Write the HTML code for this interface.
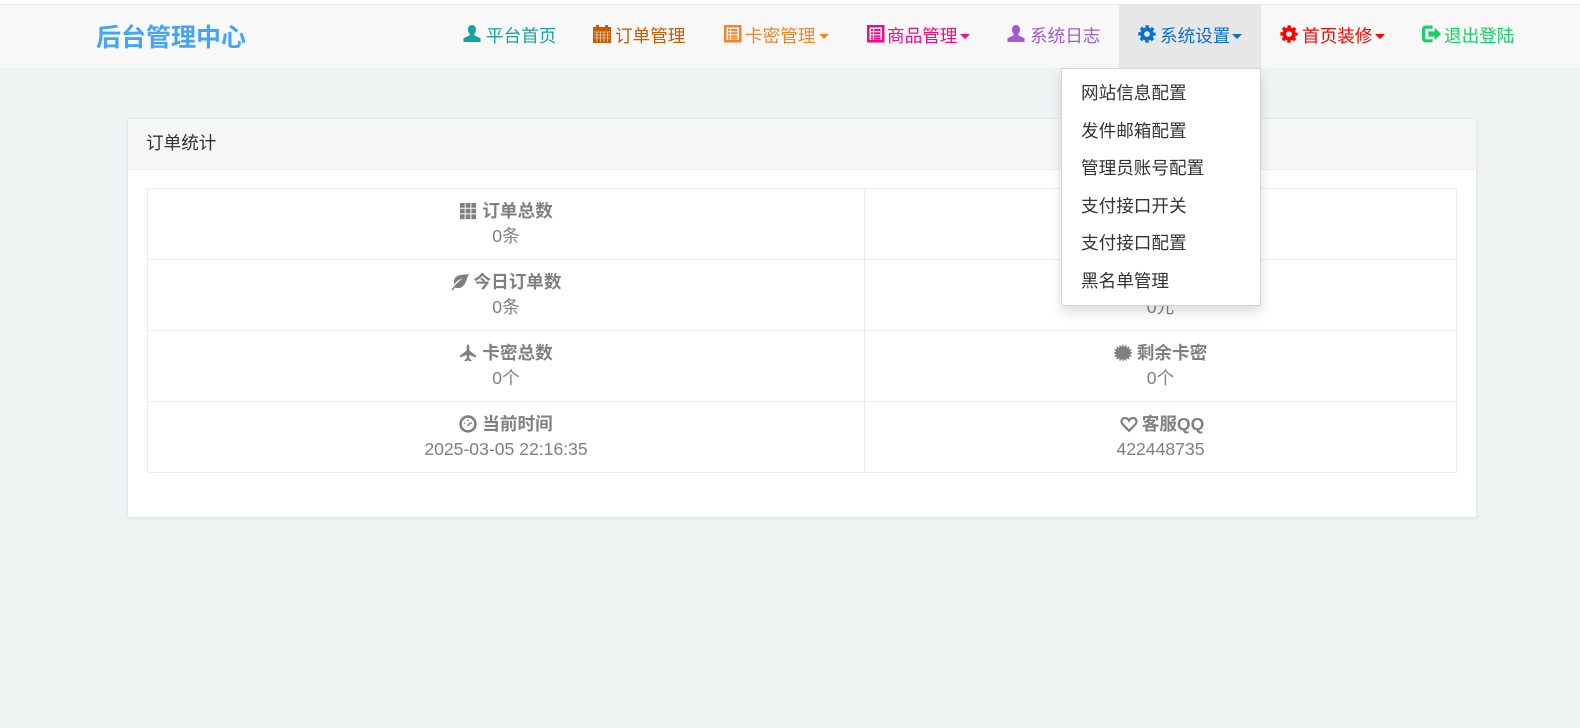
<!DOCTYPE html>
<html lang="zh-CN"><head><meta charset="utf-8"><title>后台管理中心</title>
<style>
*{box-sizing:border-box}
html,body{margin:0;padding:0}
body{width:1580px;height:728px;overflow:hidden;background:#eff3f4;position:relative;font-family:"Liberation Sans","Noto Sans CJK SC",sans-serif;font-size:17.6px;color:#333}
.top{position:absolute;left:0;top:0;width:1580px;height:5px;background:#fff;border-bottom:1px solid #e7e7e7}
.nav{position:absolute;left:0;top:5px;width:1580px;height:63px;background:#f8f8f8}
.active{position:absolute;left:1119px;top:5px;width:142px;height:63px;background:#e7e7e7}
.logo{position:absolute;left:96px;top:23px;line-height:30px;font-size:25px;font-weight:bold;color:#42a5f8;white-space:nowrap}
.i{position:absolute;top:25px;height:20px;line-height:20px;white-space:nowrap}
.i svg{position:absolute;top:0;left:0;width:18px;height:18px}
.i span{position:absolute;top:1px;white-space:nowrap}
.i b{position:absolute;top:9px;width:0;height:0;border-left:5px solid transparent;border-right:5px solid transparent;border-top:5px solid currentColor}
.panel{position:absolute;left:127px;top:118px;width:1350px;height:400px;background:#fff;border:1px solid #e3e8e8;border-radius:3px;box-shadow:0 1px 2px rgba(0,0,0,.06)}
.ph{height:51px;background:#f5f7f7;border-bottom:1px solid #e9eded;padding:0 18px;line-height:49px;color:#333}
table{position:absolute;left:19px;top:69px;width:1309px;height:285px;border-collapse:collapse;table-layout:fixed;color:#808080}
td{border:1px solid #e9eded;text-align:center;padding:10px 8px 0;line-height:25px;height:71px;vertical-align:top}
td strong{display:block;font-weight:bold}
td svg{width:18px;height:18px;vertical-align:-3px;margin-right:5px}
.menu{position:absolute;left:1061px;top:68px;width:200px;height:238px;background:#fff;border:1px solid #d5d5d5;border-radius:0 0 3px 3px;box-shadow:0 6px 12px rgba(0,0,0,.14);padding-top:6px}
.menu div{height:37.5px;line-height:37.5px;padding-left:19px;color:#333;white-space:nowrap}
</style></head><body>
<div class="top"></div><div class="nav"></div><div class="active"></div>
<div class="logo">后台管理中心</div>

<div class="i" style="left:463px;color:#17a2a0"><svg viewBox="0 0 18 18"><path fill="currentColor" d="M9 0C6.400 0 5 2 5 4.500c0 1.800.7 3.300 1.700 4.300v1.400L.5 13.300V17h17v-3.700l-6.200-3.100V8.800c1-1 1.700-2.500 1.700-4.300C13 2 11.600 0 9 0z"/></svg><span style="left:23px">平台首页</span></div>

<div class="i" style="left:593px;color:#cc5a00"><svg viewBox="0 0 18 18"><path fill="currentColor" d="M0 2h3V0h3v2h6V0h3v2h3v16H0z"/><path stroke="#f8f8f8" stroke-width=".6" d="M1 7h16M1 10h16M1 13h16M4 7v10M7.500 7v10M11 7v10M14.500 7v10"/></svg><span style="left:22px">订单管理</span></div>

<div class="i" style="left:724px;color:#f58425"><svg viewBox="0 0 18 18"><path fill="currentColor" fill-rule="evenodd" d="M0 0h17.500v17.500H0zM2.500 2.500v12.500h12.500V2.500z"/><path fill="currentColor" d="M4 4h2v2H4zM7 4h6.500v2H7zM4 7.200h2v2H4zM7 7.200h6.500v2H7zM4 10.400h2v2H4zM7 10.400h6.500v2H7zM4 13h2v1.500H4zM7 13h6.500v1.500H7z"/></svg><span style="left:21px">卡密管理</span><b style="left:95px"></b></div>

<div class="i" style="left:867px;color:#f50a84"><svg viewBox="0 0 18 18"><path fill="currentColor" fill-rule="evenodd" d="M0 0h17.500v17.500H0zM2.500 2.500v12.500h12.500V2.500z"/><path fill="currentColor" d="M4 4h2v2H4zM7 4h6.500v2H7zM4 7.200h2v2H4zM7 7.200h6.500v2H7zM4 10.400h2v2H4zM7 10.400h6.500v2H7zM4 13h2v1.500H4zM7 13h6.500v1.500H7z"/></svg><span style="left:20px">商品管理</span><b style="left:93px"></b></div>

<div class="i" style="left:1007px;color:#a05bd0"><svg viewBox="0 0 18 18"><path fill="currentColor" d="M9 0C6.400 0 5 2 5 4.500c0 1.800.7 3.300 1.700 4.300v1.400L.5 13.300V17h17v-3.700l-6.200-3.100V8.800c1-1 1.700-2.500 1.700-4.300C13 2 11.600 0 9 0z"/></svg><span style="left:23px">系统日志</span></div>

<div class="i" style="left:1138px;color:#0b70cf"><svg viewBox="0 0 18 18"><circle cx="9" cy="9" r="4.800" fill="none" stroke="currentColor" stroke-width="3.800"/><circle cx="9" cy="9" r="7.500" fill="none" stroke="currentColor" stroke-width="2.400" stroke-dasharray="3.400 2.490" stroke-dashoffset="1.700"/></svg><span style="left:22px">系统设置</span><b style="left:94px"></b></div>

<div class="i" style="left:1280px;color:#ff0000"><svg viewBox="0 0 18 18"><circle cx="9" cy="9" r="4.800" fill="none" stroke="currentColor" stroke-width="3.800"/><circle cx="9" cy="9" r="7.500" fill="none" stroke="currentColor" stroke-width="2.400" stroke-dasharray="3.400 2.490" stroke-dashoffset="1.700"/></svg><span style="left:22px">首页装修</span><b style="left:95px"></b></div>

<div class="i" style="left:1422px;color:#14d163"><svg viewBox="0 0 18 18" style="width:19px;height:19px"><path fill="none" stroke="currentColor" stroke-width="3" d="M10 2H4Q1.500 2 1.500 4.500v8Q1.500 15 4 15h6"/><path fill="currentColor" d="M6 6h6V2.500l6 6-6 6V11H6z"/></svg><span style="left:22px">退出登陆</span></div>

<div class="panel">
<div class="ph">订单统计</div>
<table>
<colgroup><col style="width:717px"><col style="width:592px"></colgroup>
<tr><td><strong><svg viewBox="0 0 18 18" fill="currentColor"><path d="M1 1h4.700v4.700H1zM6.700 1h4.700v4.700H6.700zM12.400 1h4.700v4.700h-4.700zM1 6.700h4.700v4.700H1zM6.700 6.700h4.700v4.700H6.700zM12.400 6.700h4.700v4.700h-4.700zM1 12.400h4.700v4.700H1zM6.700 12.400h4.700v4.700H6.700zM12.400 12.400h4.700v4.700h-4.700z"/></svg>订单总数</strong>0条</td>
<td><strong>交易总额</strong>0元</td></tr>
<tr><td><strong><svg viewBox="0 0 18 18" fill="currentColor"><path d="M18 1C12 2 6 1 3.500 6 2.300 8.500 3 10.500 3.500 11.500 5 8.500 8 6.500 11.500 5.500 8 8 5.500 10.500 2.800 13.500L.5 17l1.200.6 2.100-3C6 15.500 9 15.500 11.500 13.500 15.500 10.500 15.500 5 18 1z"/></svg>今日订单数</strong>0条</td>
<td><strong>今日交易额</strong>0元</td></tr>
<tr><td><strong><svg viewBox="0 0 18 18" fill="currentColor"><path d="M9 .5c.9 0 1.300 1 1.300 2.500v3.500L17 11.500v2l-6.700-2.500-.2 3 2.400 2.300V17.500L9 16.500l-3.500 1v-1.200L7.900 14l-.2-3L1 13.500v-2l6.700-5V3C7.700 1.500 8.100.5 9 .5z"/></svg>卡密总数</strong>0个</td>
<td><strong><svg viewBox="0 0 18 18" fill="currentColor"><polygon points="9,0 10.200,3 12.300,.6 12.800,3.900 15.500,2.200 15,5.300 18,5 16,7.300 18.500,9 16,10.400 17.900,12.800 14.900,12.700 15.400,15.800 12.700,14.200 12.200,17.400 10.100,15 9,18 7.800,15 5.700,17.400 5.200,14.200 2.500,15.800 3,12.700 .1,12.800 2,10.400 -.5,9 2,7.300 0,5 3,5.300 2.500,2.200 5.200,3.900 5.700,.6 7.800,3"/></svg>剩余卡密</strong>0个</td></tr>
<tr><td><strong><svg viewBox="0 0 18 18"><circle cx="9" cy="9" r="7.400" fill="none" stroke="currentColor" stroke-width="2.600"/><path stroke="currentColor" stroke-width="1.500" fill="none" d="M5 8l1 .5M9 4.500v1.500M13 8l-1 .5M8.500 11l3-3.500"/></svg>当前时间</strong>2025-03-05 22:16:35</td>
<td><strong><svg viewBox="0 0 18 18" style="margin-left:3px;margin-right:4px"><path fill="none" stroke="currentColor" stroke-width="2.200" d="M9 15.800 2.600 9.200C.5 7 1.600 3 5 3c2 0 3.200 1.100 4 2.500C9.800 4.100 11 3 13 3c3.400 0 4.500 4 2.400 6.200z"/></svg>客服QQ</strong>422448735</td></tr>
</table>
</div>

<div class="menu">
<div>网站信息配置</div><div>发件邮箱配置</div><div>管理员账号配置</div><div>支付接口开关</div><div>支付接口配置</div><div>黑名单管理</div>
</div>
</body></html>
